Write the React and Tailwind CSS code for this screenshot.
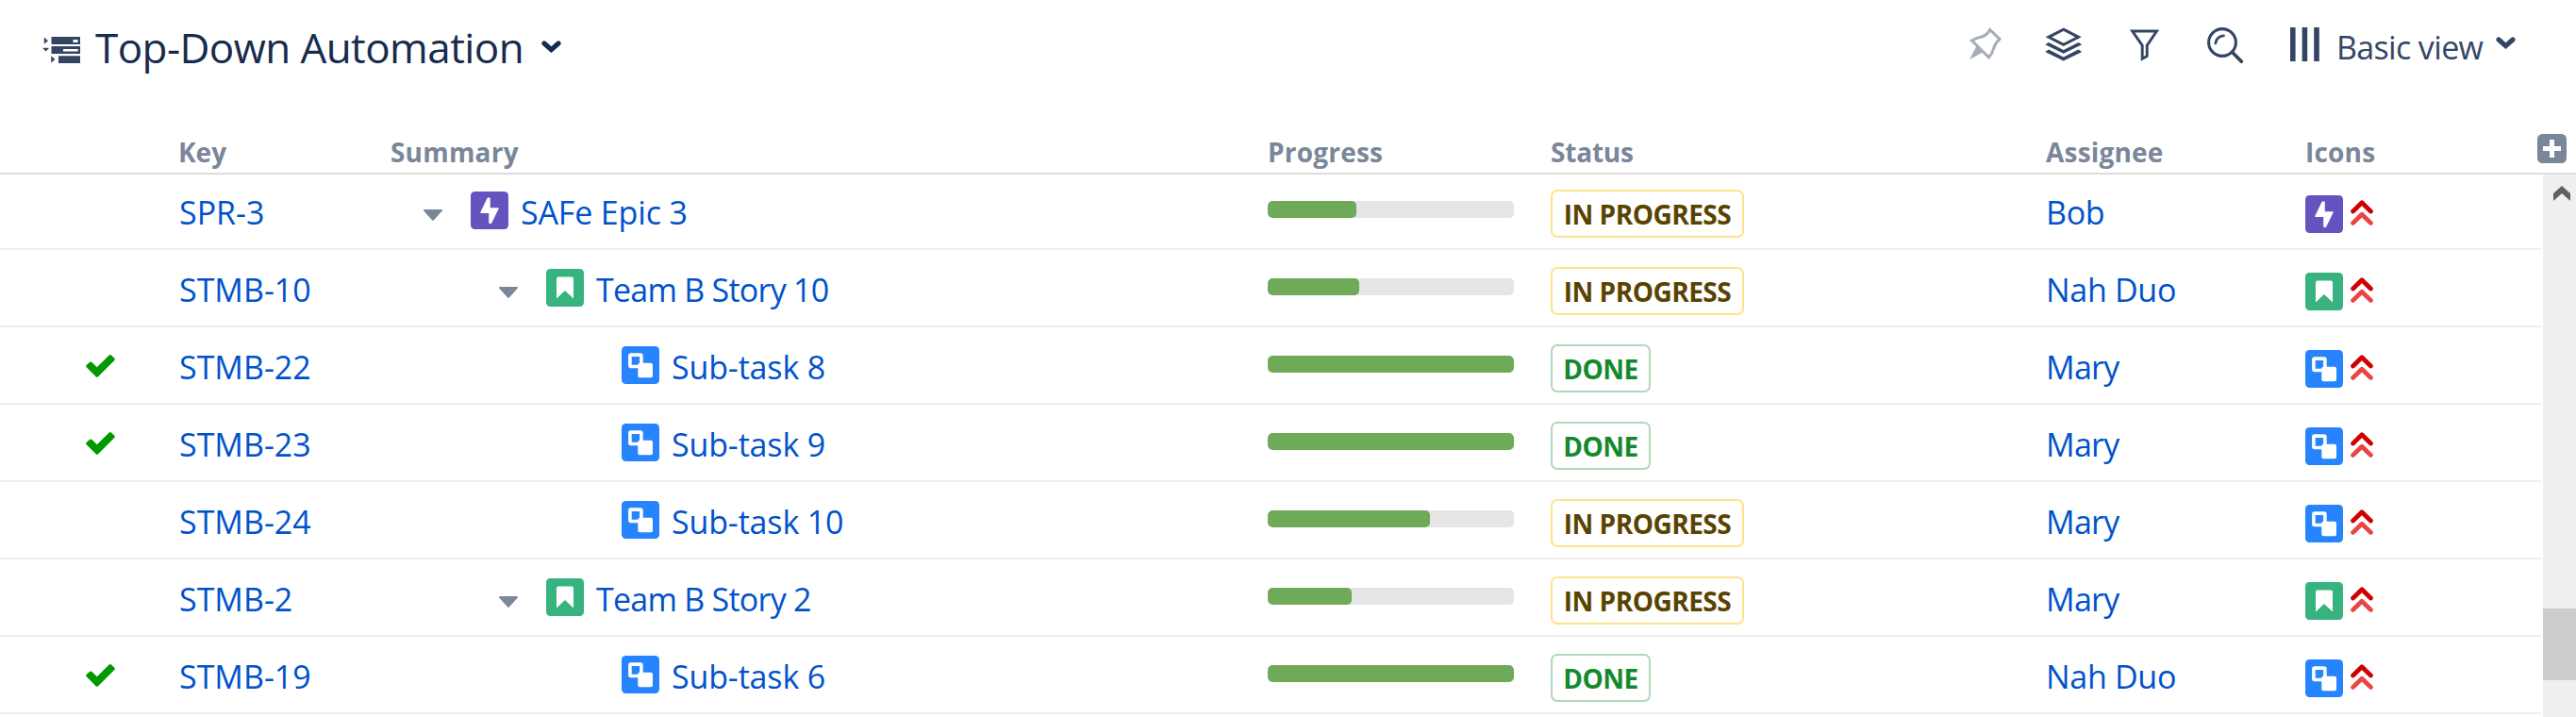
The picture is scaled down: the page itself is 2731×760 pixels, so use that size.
import React from 'react';
import clsx from 'clsx';

const COLUMNS = 'grid grid-cols-[189px_225px_930px_300px_525px_275px_1fr]';

const issues = [
  { key: 'SPR-3', type: 'epic', summary: 'SAFe Epic 3', depth: 0, progress: 94, assignee: 'Bob' },
  { key: 'STMB-10', type: 'story', summary: 'Team B Story 10', depth: 1, progress: 97, assignee: 'Nah Duo' },
  { key: 'STMB-22', type: 'subtask', summary: 'Sub-task 8', depth: 2, progress: 261, done: true, assignee: 'Mary' },
  { key: 'STMB-23', type: 'subtask', summary: 'Sub-task 9', depth: 2, progress: 261, done: true, assignee: 'Mary' },
  { key: 'STMB-24', type: 'subtask', summary: 'Sub-task 10', depth: 2, progress: 172, assignee: 'Mary' },
  { key: 'STMB-2', type: 'story', summary: 'Team B Story 2', depth: 1, progress: 89, assignee: 'Mary' },
  { key: 'STMB-19', type: 'subtask', summary: 'Sub-task 6', depth: 2, progress: 261, done: true, assignee: 'Nah Duo' },
];

const indents = ['pl-[35px]', 'pl-[115px]', 'pl-[195px]'];

function StructureIcon() {
  return (
    <svg className="mt-1.5 h-7 w-10 shrink-0 fill-[#344563]" viewBox="0 0 40 28">
      <path fillRule="evenodd" d="M9.5 0H40v8H9.5zM32.5 3v3h5V3z" />
      <path fillRule="evenodd" d="M9.5 10H40v8H9.5zM22 13v2.4h15.7V13z" />
      <path d="M17 20.3h23V28H17zM1.8 .6L6 4.2 1.8 7.8zM0 11.7h7.2L3.6 15.5zM9.2 20.3l4.2 3.6-4.2 3.7z" />
    </svg>
  );
}

function Chevron({ className }) {
  return (
    <svg className={clsx('h-[13px] w-[21px] shrink-0', className)} viewBox="0 0 21 13" fill="none" stroke="currentColor" strokeWidth="5.2" strokeLinecap="round">
      <path d="M3 3l7.5 6.6L18 3" />
    </svg>
  );
}

function PinIcon() {
  return (
    <svg className="mr-[46px] h-[38px] w-[34px] text-[#a5adba]" viewBox="0 0 34 38" fill="none" stroke="currentColor" strokeWidth="3">
      <path d="M21.7 2.5L32 12.3Q27 17 25.7 22Q24.5 27.5 20.5 31.8L2.5 14Q8 10.8 13 10Q19 8 21.7 2.5z" />
      <path d="M0 34L7.5 20l6.5 6.5z" fill="currentColor" stroke="none" />
    </svg>
  );
}

function LayersIcon() {
  return (
    <svg className="mr-[50px] h-[38px] w-10" viewBox="0 0 40 38" fill="currentColor">
      <path d="M19.7 2.2L35.5 10.3 19.7 18.4 3.9 10.3z" fill="none" stroke="currentColor" strokeWidth="3" />
      <path d="M.2 18.2L4 15.9l15.7 8 15.7-8 3.8 2.3-19.5 9.5z" />
      <path d="M.2 25.9L4 23.6l15.7 8 15.7-8 3.8 2.3-19.5 9.5z" />
    </svg>
  );
}

function FilterIcon() {
  return (
    <svg className="mr-[51px] h-[38px] w-[31px]" viewBox="0 0 31 38" fill="none" stroke="currentColor" strokeWidth="2.9">
      <path d="M2.7 4H28.5L18.2 19.3V30.5L13.2 33.2V19.3z" />
    </svg>
  );
}

function SearchIcon() {
  return (
    <svg className="mr-[49px] h-[38px] w-[39px]" viewBox="0 0 39 38" fill="none" stroke="currentColor" strokeWidth="3.1" strokeLinecap="round">
      <circle cx="16" cy="16" r="14.4" />
      <path d="M8.8 17A8.7 8.7 0 0 1 17.5 8.8" strokeWidth="2.7" />
      <path d="M26.5 26.3L36.3 36.1" strokeWidth="3.7" />
    </svg>
  );
}

function ColumnsIcon() {
  return (
    <svg className="mr-[18px] h-[38px] w-[31px]" viewBox="0 0 31 38" fill="currentColor">
      <path d="M0 0h5.6v36H0zM12.6 0h5.6v36h-5.6zM25.2 0h5.6v36h-5.6z" />
    </svg>
  );
}

function IssueIcon({ type }) {
  return (
    <svg className="size-10 shrink-0" viewBox="0 0 40 40">
      {type === 'epic' && (
        <>
          <rect width="40" height="40" rx="4.5" fill="#6554c0" />
          <path d="M18.2 7.2L11 22.2H20V33.2H21.5L29 18H20V7.2z" fill="#fff" stroke="#fff" strokeWidth="1.5" strokeLinejoin="round" />
        </>
      )}
      {type === 'story' && (
        <>
          <rect width="40" height="40" rx="4.5" fill="#36b37e" />
          <path d="M11 31.5V10.5a2 2 0 0 1 2-2h14a2 2 0 0 1 2 2v21l-9-8.5z" fill="#fff" />
        </>
      )}
      {type === 'subtask' && (
        <>
          <rect width="40" height="40" rx="4.5" fill="#2684ff" />
          <rect x="8.9" y="9.1" width="12" height="12.4" rx="1" fill="none" stroke="#fff" strokeWidth="3.6" />
          <rect x="17.3" y="17.8" width="15.7" height="15.4" rx="2" fill="#fff" />
        </>
      )}
    </svg>
  );
}

function PriorityIcon() {
  return (
    <svg className="mt-[5px] h-[27px] w-6" viewBox="0 0 24 27" fill="none" strokeWidth="4.8" strokeLinecap="round" strokeLinejoin="round">
      <path d="M2.6 12L12 2.8 21.4 12" stroke="#ce0000" />
      <path d="M2.6 24.4L12 15.2l9.4 9.2" stroke="#ea4444" />
    </svg>
  );
}

function CheckIcon() {
  return (
    <svg className="ml-[91px] mt-0.5 h-6 w-[31px]" viewBox="0 0 31 24" fill="#090">
      <path d="M.7 13.3Q-.2 12.2.7 11L4.2 7.8Q5.4 7 6.5 8L11.8 13.2 24.7.6Q25.9-.4 27 .6L30.3 3.7Q31.2 4.9 30.3 6L13 23.3Q11.8 24.4 10.6 23.3z" />
    </svg>
  );
}

function StatusBadge({ done }) {
  return (
    <span
      className={clsx(
        'mt-[7px] flex h-[51px] items-center justify-center rounded-[7px] border-2 pt-px text-[28px] leading-none font-bold tracking-[-0.5px]',
        done ? 'w-[106px] border-[#b2d8b9] text-[#14892c]' : 'w-[205px] border-[#ffe28c] text-[#594300]'
      )}
    >
      {done ? 'DONE' : 'IN PROGRESS'}
    </span>
  );
}

function IssueRow({ issue }) {
  return (
    <div className={clsx(COLUMNS, 'h-[82px] border-b-2 border-[#ededed] text-[34px] leading-[46px] text-[#0052cc]')}>
      <div className="flex items-center">{issue.done && <CheckIcon />}</div>
      <div className="flex items-center">
        <a className="mt-1 ml-px">{issue.key}</a>
      </div>
      <div className={clsx('flex items-center', indents[issue.depth])}>
        {issue.depth < 2 ? (
          <svg className="mt-2.5 mr-[30px] h-3 w-5" viewBox="0 0 20 12" fill="#7a869a">
            <path d="M1 0h18q1.6.3.6 1.8L11 11.3q-1 1-2 0L.4 1.8Q-.6.3 1 0z" />
          </svg>
        ) : (
          <span className="w-[50px]" />
        )}
        <IssueIcon type={issue.type} />
        <a className={clsx('mt-1 ml-[13px] whitespace-nowrap', issue.type === 'story' ? 'tracking-[-0.75px]' : 'tracking-[-0.15px]')}>
          {issue.summary}
        </a>
      </div>
      <div className="flex items-center">
        <div className="mb-0.5 h-[18px] w-[261px] overflow-hidden rounded-[5px] bg-[#e5e5e5]">
          <div className="h-full rounded-[5px] bg-[#6faa59]" style={{ width: issue.progress }} />
        </div>
      </div>
      <div className="flex items-center">
        <StatusBadge done={issue.done} />
      </div>
      <div className="flex items-center">
        <a className={clsx('mt-1', issue.assignee === 'Mary' ? 'tracking-[-0.7px]' : 'tracking-[-0.3px]')}>{issue.assignee}</a>
      </div>
      <div className="flex items-start gap-2 pt-6">
        <IssueIcon type={issue.type} />
        <PriorityIcon />
      </div>
    </div>
  );
}

export default function App() {
  return (
    <div className="h-[760px] w-[2731px] overflow-hidden bg-white font-['Open_Sans','Noto_Sans',sans-serif]">
      <header className="flex h-[100px] items-center pr-16 pl-[45px]">
        <StructureIcon />
        <h1 className="ml-4 w-[473px] text-[44px] leading-[60px] tracking-[-0.58px] whitespace-nowrap text-[#172b4d]">
          Top-Down Automation
        </h1>
        <Chevron className="mb-0.5 text-[#172b4d]" />
        <div className="ml-auto flex items-center text-[#344563]">
          <div className="flex pb-1">
            <PinIcon />
            <LayersIcon />
            <FilterIcon />
            <SearchIcon />
            <ColumnsIcon />
          </div>
          <span className="w-[169px] text-[34px] leading-[46px] tracking-[-0.65px] whitespace-nowrap">Basic view</span>
          <Chevron className="mb-2.5" />
        </div>
      </header>

      <div className={clsx(COLUMNS, 'relative z-10 h-[85px] items-end border-b-2 border-[#dcdcdc] text-[28px] leading-[38px] font-bold text-[#7a869a]')}>
        <span />
        <span className="pb-[3px]">Key</span>
        <span className="pb-[3px] tracking-[0.2px]">Summary</span>
        <span className="pb-[3px] tracking-[0.2px]">Progress</span>
        <span className="pb-[3px] tracking-[-0.2px]">Status</span>
        <span className="pb-[3px] tracking-[0.2px]">Assignee</span>
        <div className="flex items-end justify-between pr-2.5">
          <span className="pb-[3px] tracking-[0.2px]">Icons</span>
          <svg className="mb-2.5 size-[31px]" viewBox="0 0 31 31">
            <rect width="31" height="31" rx="5.5" fill="#7a869a" />
            <path d="M13 6h5v7h7v5h-7v7h-5v-7H6v-5h7z" fill="#fff" />
          </svg>
        </div>
      </div>

      <div className="flex">
        <div className="-mt-0.5 w-[2694px]">
          {issues.map((issue) => (
            <IssueRow key={issue.key} issue={issue} />
          ))}
        </div>
        <div className="ml-0.5 h-[575px] w-[35px] bg-[#efefef]">
          <svg className="mt-3 ml-[11px] h-4 w-[18px]" viewBox="0 0 18 16" fill="#606060">
            <path d="M9 0l9 8v8L9 8l-9 8V8z" />
          </svg>
          <div className="mt-[432px] h-[76px] bg-[#cdcdcd]" />
        </div>
      </div>
    </div>
  );
}
